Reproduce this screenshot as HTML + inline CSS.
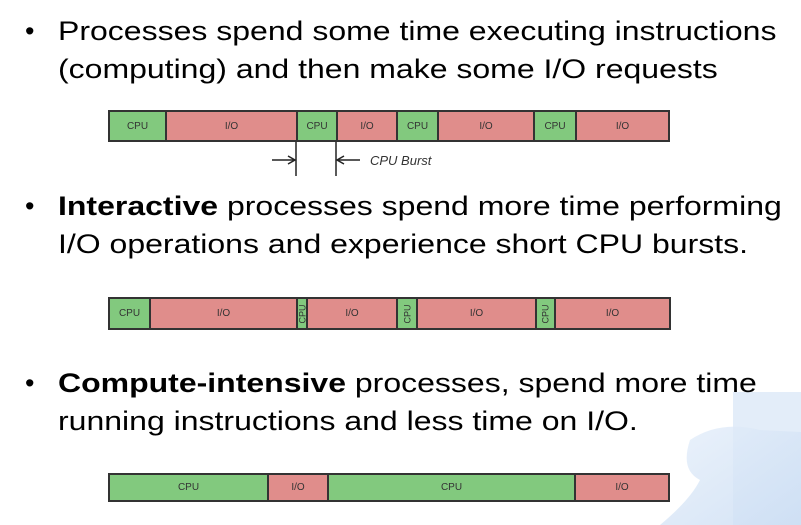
<!DOCTYPE html>
<html><head><style>
body{margin:0;width:801px;height:525px;background:#fff;position:relative;overflow:hidden;font-family:"Liberation Sans",Arial,sans-serif;}
.t{position:absolute;left:58px;font-size:27px;line-height:38px;color:#000;white-space:nowrap;transform:scaleX(1.185);transform-origin:0 0;}
.b{position:absolute;left:25px;font-size:27px;line-height:38px;}
.bar{position:absolute;border:2px solid #333;display:flex;box-sizing:border-box;}
.s{box-sizing:border-box;border-right:2px solid #333;display:flex;align-items:center;justify-content:center;font-size:10px;color:#333;}
.s:last-child{border-right:none}
.g{background:#82c97e}.r{background:#e08d8b}
.v span{transform:rotate(-90deg);display:block;font-size:9px}
</style></head><body>
<svg style="position:absolute;left:0;top:0" width="801" height="525">
<defs><linearGradient id="h" x1="0" y1="0" x2="1" y2="1"><stop offset="0" stop-color="#e6effa"/><stop offset="1" stop-color="#c9dcf3"/></linearGradient></defs>
<rect x="733" y="392" width="68" height="133" fill="#e3edf9"/>
<path d="M690 440 Q720 420 760 430 L801 432 L801 525 L660 525 Q690 500 700 480 Q680 470 690 440Z" fill="url(#h)" opacity="0.8"/>
</svg>
<div class="b" style="top:12px">•</div>
<div class="t" style="top:12px">Processes spend some time executing instructions<br>(computing) and then make some I/O requests</div>
<div class="bar" style="left:108px;top:110px;width:562px;height:32px">
<div class="s g" style="width:57px">CPU</div><div class="s r" style="width:131px">I/O</div><div class="s g" style="width:40px">CPU</div><div class="s r" style="width:60px">I/O</div><div class="s g" style="width:41px">CPU</div><div class="s r" style="width:96px">I/O</div><div class="s g" style="width:42px">CPU</div><div class="s r" style="flex:1">I/O</div></div>
<svg style="position:absolute;left:0;top:0" width="801" height="525">
<line x1="296" y1="142" x2="296" y2="176" stroke="#222" stroke-width="1.5"/>
<line x1="336" y1="142" x2="336" y2="176" stroke="#222" stroke-width="1.5"/>
<line x1="272" y1="160" x2="294" y2="160" stroke="#222" stroke-width="1.5"/><path d="M288 156 L295 160 L288 164" fill="none" stroke="#222" stroke-width="1.5"/>
<line x1="338" y1="160" x2="360" y2="160" stroke="#222" stroke-width="1.5"/><path d="M344 156 L337 160 L344 164" fill="none" stroke="#222" stroke-width="1.5"/>
<text x="370" y="165" font-family="Liberation Sans" font-style="italic" font-size="13" fill="#333">CPU Burst</text>
</svg>
<div class="b" style="top:187px">•</div>
<div class="t" style="top:187px"><b>Interactive</b> processes spend more time performing<br>I/O operations and experience short CPU bursts.</div>
<div class="bar" style="left:108px;top:297px;width:563px;height:33px">
<div class="s g" style="width:41px">CPU</div><div class="s r" style="width:147px">I/O</div><div class="s g v" style="width:10px"><span>CPU</span></div><div class="s r" style="width:90px">I/O</div><div class="s g v" style="width:20px"><span>CPU</span></div><div class="s r" style="width:119px">I/O</div><div class="s g v" style="width:19px"><span>CPU</span></div><div class="s r" style="flex:1">I/O</div></div>
<div class="b" style="top:364px">•</div>
<div class="t" style="top:364px"><b>Compute-intensive</b> processes, spend more time<br>running instructions and less time on I/O.</div>
<div class="bar" style="left:108px;top:473px;width:562px;height:29px">
<div class="s g" style="width:159px">CPU</div><div class="s r" style="width:60px">I/O</div><div class="s g" style="width:247px">CPU</div><div class="s r" style="flex:1">I/O</div></div>
</body></html>
